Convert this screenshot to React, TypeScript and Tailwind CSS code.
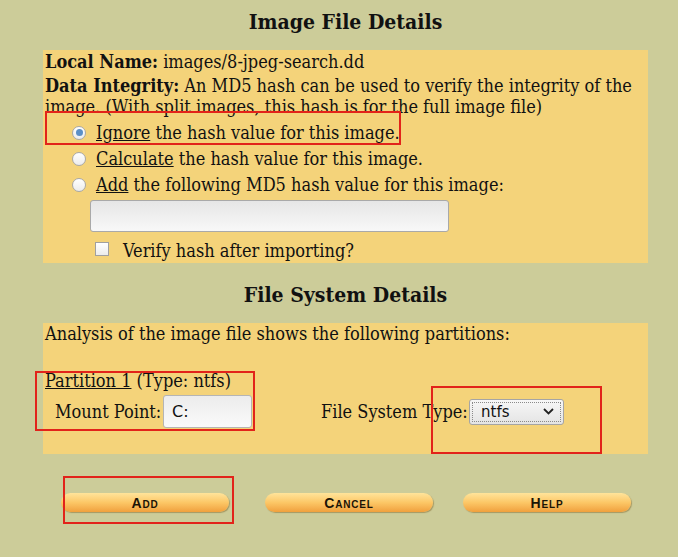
import React from 'react';

const serif = { fontFamily: '"DejaVu Serif Condensed", "DejaVu Serif", serif' };

const Radio: React.FC<{ checked?: boolean }> = ({ checked }) => (
  <span className="flex h-[14px] w-[14px] shrink-0 items-center justify-center rounded-full border border-[#a8a8a8] bg-gradient-to-b from-white to-[#ececec]">
    {checked && <span className="h-[7px] w-[7px] rounded-full bg-[#5b8fc7]" />}
  </span>
);

const PillButton: React.FC<{ label: string }> = ({ label }) => (
  <div className="flex h-[19px] w-[168px] items-center justify-center rounded-full bg-gradient-to-b from-[#ffe49a] via-[#fcc766] to-[#f0a03c] shadow-[1px_1px_1px_rgba(120,90,30,0.45)]">
    <span
      className="text-[14px] font-bold leading-none tracking-[0.8px] text-[#1b1406]"
      style={{ fontFamily: '"Liberation Sans", Arial, sans-serif', fontVariant: 'small-caps' }}
    >
      {label}
    </span>
  </div>
);

export default function App() {
  return (
    <div className="relative h-[557px] w-[678px] overflow-hidden bg-[#cccc99] text-[18px] text-[#111]" style={serif}>
      <div className="ml-[43px] w-[605px]">
        <h1 className="flex h-[50px] items-start justify-center pt-[6px] text-[21px] font-bold">Image File Details</h1>

        <div className="h-[213px] bg-[#f4d37a] pl-[2px] pt-[2px] leading-[20px]">
          <div className="h-[21px]">
            <b>Local Name:</b> images/8-jpeg-search.dd
          </div>
          <div className="mt-[2px] pr-[10px] leading-[21px]">
            <b>Data Integrity:</b> An MD5 hash can be used to verify the integrity of the image. (With split images, this hash is for the full image file)
          </div>
          <div className="mt-[2px] flex h-[27px] items-center gap-[10px] pl-[27px]">
            <Radio checked />
            <span>
              <u>Ignore</u> the hash value for this image.
            </span>
          </div>
          <div className="flex h-[26px] items-center gap-[10px] pl-[27px]">
            <Radio />
            <span>
              <u>Calculate</u> the hash value for this image.
            </span>
          </div>
          <div className="flex h-[26px] items-center gap-[10px] pl-[27px]">
            <Radio />
            <span>
              <u>Add</u> the following MD5 hash value for this image:
            </span>
          </div>
          <div className="ml-[45px] mt-[2px] h-[32px] w-[359px] rounded-[3px] border border-[#a9a9a9] bg-gradient-to-b from-[#e6e6e6] to-[#f8f8f8]" />
          <div className="mt-[9px] flex h-[16px] items-center gap-[14px] pl-[50px]">
            <span className="h-[14px] w-[14px] shrink-0 border border-[#a0a0a0] bg-gradient-to-b from-white to-[#ececec]" />
            <span className="mt-[3px]">Verify hash after importing?</span>
          </div>
        </div>

        <h2 className="flex h-[60px] items-start justify-center pt-[16px] text-[21px] font-bold">File System Details</h2>

        <div className="h-[131px] bg-[#f4d37a] pl-[2px] pt-[1px] leading-[20px]">
          <div>Analysis of the image file shows the following partitions:</div>
          <div className="mt-[27px]">
            <u>Partition 1</u> (Type: ntfs)
          </div>
          <div className="mt-[4px] flex items-center">
            <span className="w-[118px] shrink-0 pl-[10px]">Mount Point:</span>
            <div
              className="flex h-[33px] w-[89px] shrink-0 items-center rounded-[3px] border border-[#b5b5b5] bg-gradient-to-b from-[#ececec] to-[#fafafa] pl-[8px] text-[16px]"
              style={{ fontFamily: '"DejaVu Sans", sans-serif' }}
            >
              C:
            </div>
            <span className="ml-[69px] w-[148px] shrink-0">File System Type:</span>
            <div
              className="flex h-[26px] w-[95px] shrink-0 items-center justify-between rounded-[3px] border border-[#a5a5a5] bg-gradient-to-b from-[#f7f7f7] to-[#e4e4e4] px-[2px] text-[15px]"
              style={{ fontFamily: '"DejaVu Sans", sans-serif' }}
            >
              <div className="flex h-[20px] flex-1 items-center justify-between border border-dotted border-[#8a8a8a] pl-[8px] pr-[6px]">
                <span>ntfs</span>
                <svg width="11" height="7" viewBox="0 0 11 7">
                  <path d="M1 1l4.5 4.5L10 1" fill="none" stroke="#222" strokeWidth="1.8" />
                </svg>
              </div>
            </div>
          </div>
        </div>
      </div>

      <div className="mt-[39px] flex pl-[61px]">
        <PillButton label="Add" />
        <div className="w-[36px]" />
        <PillButton label="Cancel" />
        <div className="w-[30px]" />
        <PillButton label="Help" />
      </div>

      {/* red annotation boxes */}
      <div className="absolute left-[45px] top-[111px] h-[34px] w-[356px] border-2 border-[#e2231a]" />
      <div className="absolute left-[35px] top-[371px] h-[60px] w-[220px] border-2 border-[#e2231a]" />
      <div className="absolute left-[431px] top-[386px] h-[68px] w-[171px] border-2 border-[#e2231a]" />
      <div className="absolute left-[63px] top-[476px] h-[48px] w-[171px] border-2 border-[#e2231a]" />
    </div>
  );
}
